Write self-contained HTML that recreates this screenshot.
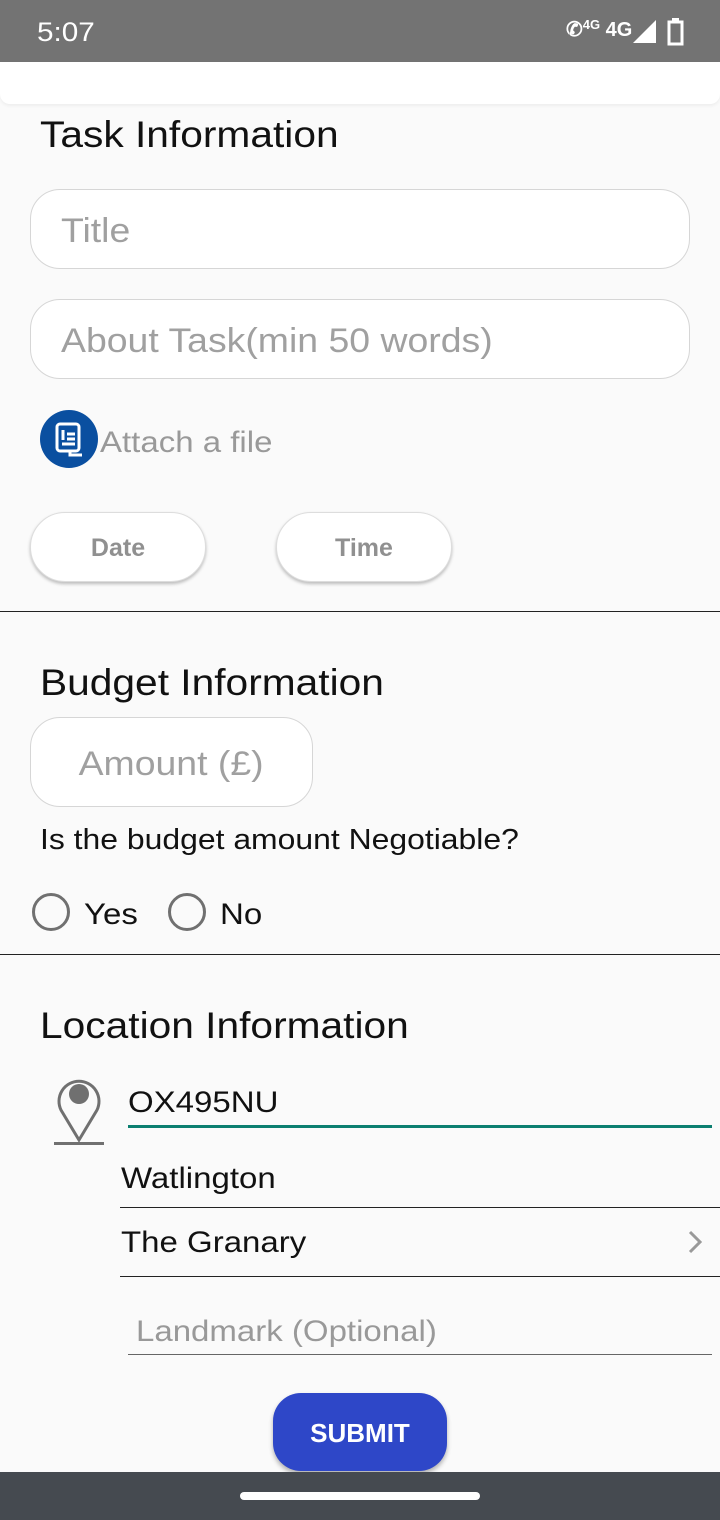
<!DOCTYPE html>
<html><head><meta charset="utf-8"><style>
*{margin:0;padding:0;box-sizing:border-box}
body{width:720px;height:1520px;background:#fafafa;font-family:"Liberation Sans",sans-serif;position:relative;overflow:hidden;color:#111}
.a{position:absolute}
.s{display:inline-block;transform:scaleX(1.1);transform-origin:left center;white-space:nowrap}
.status{left:0;top:0;width:720px;height:62px;background:#737373;color:#fff}
.hdr{left:0;top:62px;width:720px;height:42px;background:#fff;border-radius:0 0 10px 10px;box-shadow:0 2px 3px rgba(0,0,0,.05)}
h2{position:absolute;font-weight:normal;font-size:37px;color:#111}
.inp{position:absolute;background:#fff;border:1px solid #d6d6d6;border-radius:30px;color:#a0a0a0;font-size:34px}
.pill{position:absolute;background:#fff;border-radius:36px;box-shadow:0 2px 3px rgba(0,0,0,.25);border:1px solid #ddd;color:#909090;font-size:25px;font-weight:bold;text-align:center;line-height:70px;width:176px;height:70px}
.hr{position:absolute;left:0;width:720px;height:1px;background:#222}
.radio{position:absolute;width:38px;height:38px;border:3px solid #707070;border-radius:50%}
.t{position:absolute;font-size:30px;color:#111}
.line{position:absolute;height:1px;background:#222}
</style></head><body>
<div class="a status">
 <div class="a" style="left:37px;top:17px;font-size:27px"><span class="s">5:07</span></div>
 <div class="a" style="left:566px;top:17px;font-size:20px;font-weight:bold">&#9990;<span style="font-size:13px;vertical-align:top">4G</span> 4G</div>
 <svg class="a" style="left:632px;top:18px" width="26" height="26"><polygon points="24,2 24,25 1,25" fill="#fff"/></svg>
 <svg class="a" style="left:667px;top:18px" width="18" height="28"><rect x="5" y="0" width="7" height="4" fill="#fff"/><rect x="2" y="4" width="13" height="22" fill="none" stroke="#fff" stroke-width="3"/></svg>
</div>
<div class="a hdr"></div>
<h2 style="left:40px;top:114px"><span class="s">Task Information</span></h2>
<div class="inp" style="left:30px;top:189px;width:660px;height:80px;padding:22px 30px"><span class="s">Title</span></div>
<div class="inp" style="left:30px;top:299px;width:660px;height:80px;padding:22px 30px"><span class="s">About Task(min 50 words)</span></div>
<svg class="a" style="left:40px;top:410px" width="60" height="58"><circle cx="29" cy="29" r="29" fill="#0a4fa0"/><rect x="17" y="14" width="22" height="27" rx="3" fill="none" stroke="#fff" stroke-width="3"/><path d="M23 20v10M27 24h8M27 29h8M22 34h13M30 41v4h12" stroke="#fff" stroke-width="3" fill="none"/></svg>
<div class="a" style="left:100px;top:426px;font-size:30px;color:#999"><span class="s">Attach a file</span></div>
<div class="pill" style="left:30px;top:512px">Date</div>
<div class="pill" style="left:276px;top:512px">Time</div>
<div class="hr" style="top:611px"></div>
<h2 style="left:40px;top:662px"><span class="s">Budget Information</span></h2>
<div class="inp" style="left:30px;top:717px;width:283px;height:90px;text-align:center;line-height:92px"><span class="s" style="transform-origin:center">Amount (£)</span></div>
<div class="t" style="left:40px;top:824px;font-size:29px"><span class="s">Is the budget amount Negotiable?</span></div>
<div class="radio" style="left:32px;top:893px"></div><div class="t" style="left:84px;top:898px"><span class="s">Yes</span></div>
<div class="radio" style="left:168px;top:893px"></div><div class="t" style="left:220px;top:898px"><span class="s">No</span></div>
<div class="hr" style="top:954px"></div>
<h2 style="left:40px;top:1005px"><span class="s">Location Information</span></h2>
<svg class="a" style="left:50px;top:1070px" width="60" height="80"><path d="M29 70 L11 40 A20 20 0 1 1 47 40 Z" fill="none" stroke="#707070" stroke-width="3"/><circle cx="29" cy="24" r="10" fill="#707070"/><rect x="4" y="72" width="50" height="3" fill="#707070"/></svg>
<div class="t" style="left:128px;top:1086px"><span class="s">OX495NU</span></div>
<div class="a" style="left:128px;top:1125px;width:584px;height:3px;background:#0b7f70"></div>
<div class="t" style="left:121px;top:1162px"><span class="s">Watlington</span></div>
<div class="line" style="left:120px;top:1207px;width:600px"></div>
<div class="t" style="left:121px;top:1226px"><span class="s">The Granary</span></div>
<svg class="a" style="left:686px;top:1229px" width="20" height="26"><path d="M4 3 L14 13 L4 23" fill="none" stroke="#999" stroke-width="3"/></svg>
<div class="line" style="left:120px;top:1276px;width:600px"></div>
<div class="t" style="left:136px;top:1315px;color:#999"><span class="s">Landmark (Optional)</span></div>
<div class="line" style="left:128px;top:1354px;width:584px;background:#666"></div>
<div class="a" style="left:273px;top:1393px;width:174px;height:78px;border-radius:28px;background:#2e47c8;color:#fff;font-size:26px;font-weight:bold;text-align:center;line-height:80px;box-shadow:0 3px 5px rgba(0,0,0,.3)">SUBMIT</div>
<div class="a" style="left:0;top:1472px;width:720px;height:48px;background:#454a50"></div>
<div class="a" style="left:240px;top:1492px;width:240px;height:8px;border-radius:4px;background:#fff"></div>
</body></html>
